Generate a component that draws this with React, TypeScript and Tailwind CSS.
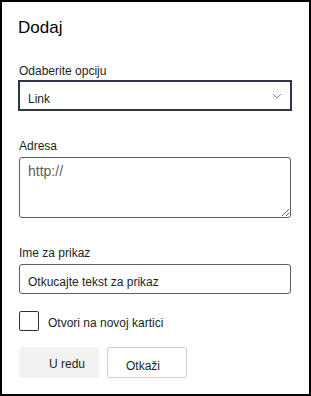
function Chevron() {
  return (
    <svg width="10" height="6" viewBox="0 0 10 6" fill="none">
      <path d="M1 1l4 4 4-4" stroke="#8a8886" strokeWidth="1" />
    </svg>
  );
}

function App() {
  return (
    <div
      className="w-[311px] h-[396px] border-2 border-black bg-white pl-[16px] pr-[17px] pt-[14px] text-[#201f1e]"
      style={{ fontFamily: '"Liberation Sans", Arial, sans-serif' }}
    >
      <h1 className="text-[17px] leading-[24px] text-black">Dodaj</h1>

      <div className="mt-[23px]">
        <label className="block pl-[1px] text-[12px] leading-[16px]">Odaberite opciju</label>
        <div className="mt-[1px] h-[31px] w-full border-2 border-[#2f3547] flex items-center justify-between pl-[8px] pr-[8px]">
          <span className="pt-[6px] text-[12px] leading-[16px]">Link</span>
          <Chevron />
        </div>
      </div>

      <div className="mt-[27px]">
        <label className="block pl-[1px] text-[12px] leading-[16px]">Adresa</label>
        <textarea
          className="mt-[3px] ml-[1px] block h-[61px] w-[272px] rounded-[3px] border border-[#605e5c] px-[8px] pt-[3px] text-[14px] leading-[20px] placeholder:text-[#605e5c] outline-none"
          placeholder="http://"
        />
      </div>

      <div className="mt-[27px]">
        <label className="block pl-[1px] text-[12px] leading-[16px]">Ime za prikaz</label>
        <input
          className="mt-[3px] ml-[1px] block h-[30px] w-[272px] rounded-[3px] border border-[#605e5c] px-[8px] pt-[5px] text-[12px] leading-[16px] placeholder:text-[#201f1e] outline-none"
          placeholder="Otkucajte tekst za prikaz"
        />
      </div>

      <label className="mt-[17px] ml-[1px] flex items-center gap-[9px] text-[12px] leading-[16px]">
        <span className="h-[20px] w-[20px] rounded-[2px] border border-[#323130]" />
        <span className="pt-[3px]">Otvori na novoj kartici</span>
      </label>

      <div className="mt-[16px] ml-[1px] flex gap-[8px]">
        <button className="h-[31px] w-[80px] rounded-[3px] bg-[#f3f2f1] pl-[30px] pt-[2px] text-left text-[12px] leading-[16px]">
          U redu
        </button>
        <button className="h-[31px] w-[80px] rounded-[3px] border border-[#d2d0ce] pl-[18px] pt-[6px] text-left text-[12px] leading-[16px]">
          Otkaži
        </button>
      </div>
    </div>
  );
}

export default App;
